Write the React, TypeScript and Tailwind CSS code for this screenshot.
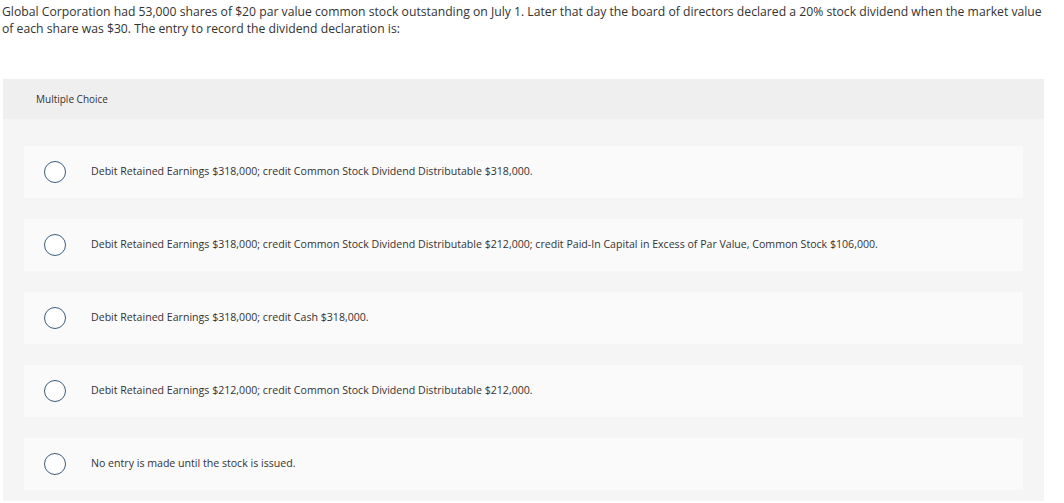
const options = [
  'Debit Retained Earnings $318,000; credit Common Stock Dividend Distributable $318,000.',
  'Debit Retained Earnings $318,000; credit Common Stock Dividend Distributable $212,000; credit Paid-In Capital in Excess of Par Value, Common Stock $106,000.',
  'Debit Retained Earnings $318,000; credit Cash $318,000.',
  'Debit Retained Earnings $212,000; credit Common Stock Dividend Distributable $212,000.',
  'No entry is made until the stock is issued.',
];

export default function App() {
  return (
    <div className="h-[503px] w-[1064px] overflow-hidden bg-white font-['Open_Sans',sans-serif] text-[#333]">
      <p className="pl-[2px] pr-[20px] pt-[3px] text-[12.2px] leading-[17px]">
        Global Corporation had 53,000 shares of $20 par value common stock outstanding on July 1. Later that day the board of directors declared a 20% stock dividend when the market value of each share was $30. The entry to record the dividend declaration is:
      </p>
      <div className="ml-[3px] mt-[42px] w-[1041px] bg-[#f5f5f5]">
        <div className="flex h-[40px] items-center bg-[#efefef] pl-[33px] text-[10px]">Multiple Choice</div>
        <div className="flex flex-col gap-[21px] pb-[11px] pl-[21px] pr-[21px] pt-[27px]">
          {options.map((o) => (
            <div key={o} className="flex h-[52px] items-center bg-[#fafafa]">
              <span className="ml-[20px] h-[22px] w-[22px] shrink-0 rounded-full border-[1.5px] border-[#3e5d7a] bg-white" />
              <span className="ml-[25px] text-[10.6px]">{o}</span>
            </div>
          ))}
        </div>
      </div>
    </div>
  );
}
